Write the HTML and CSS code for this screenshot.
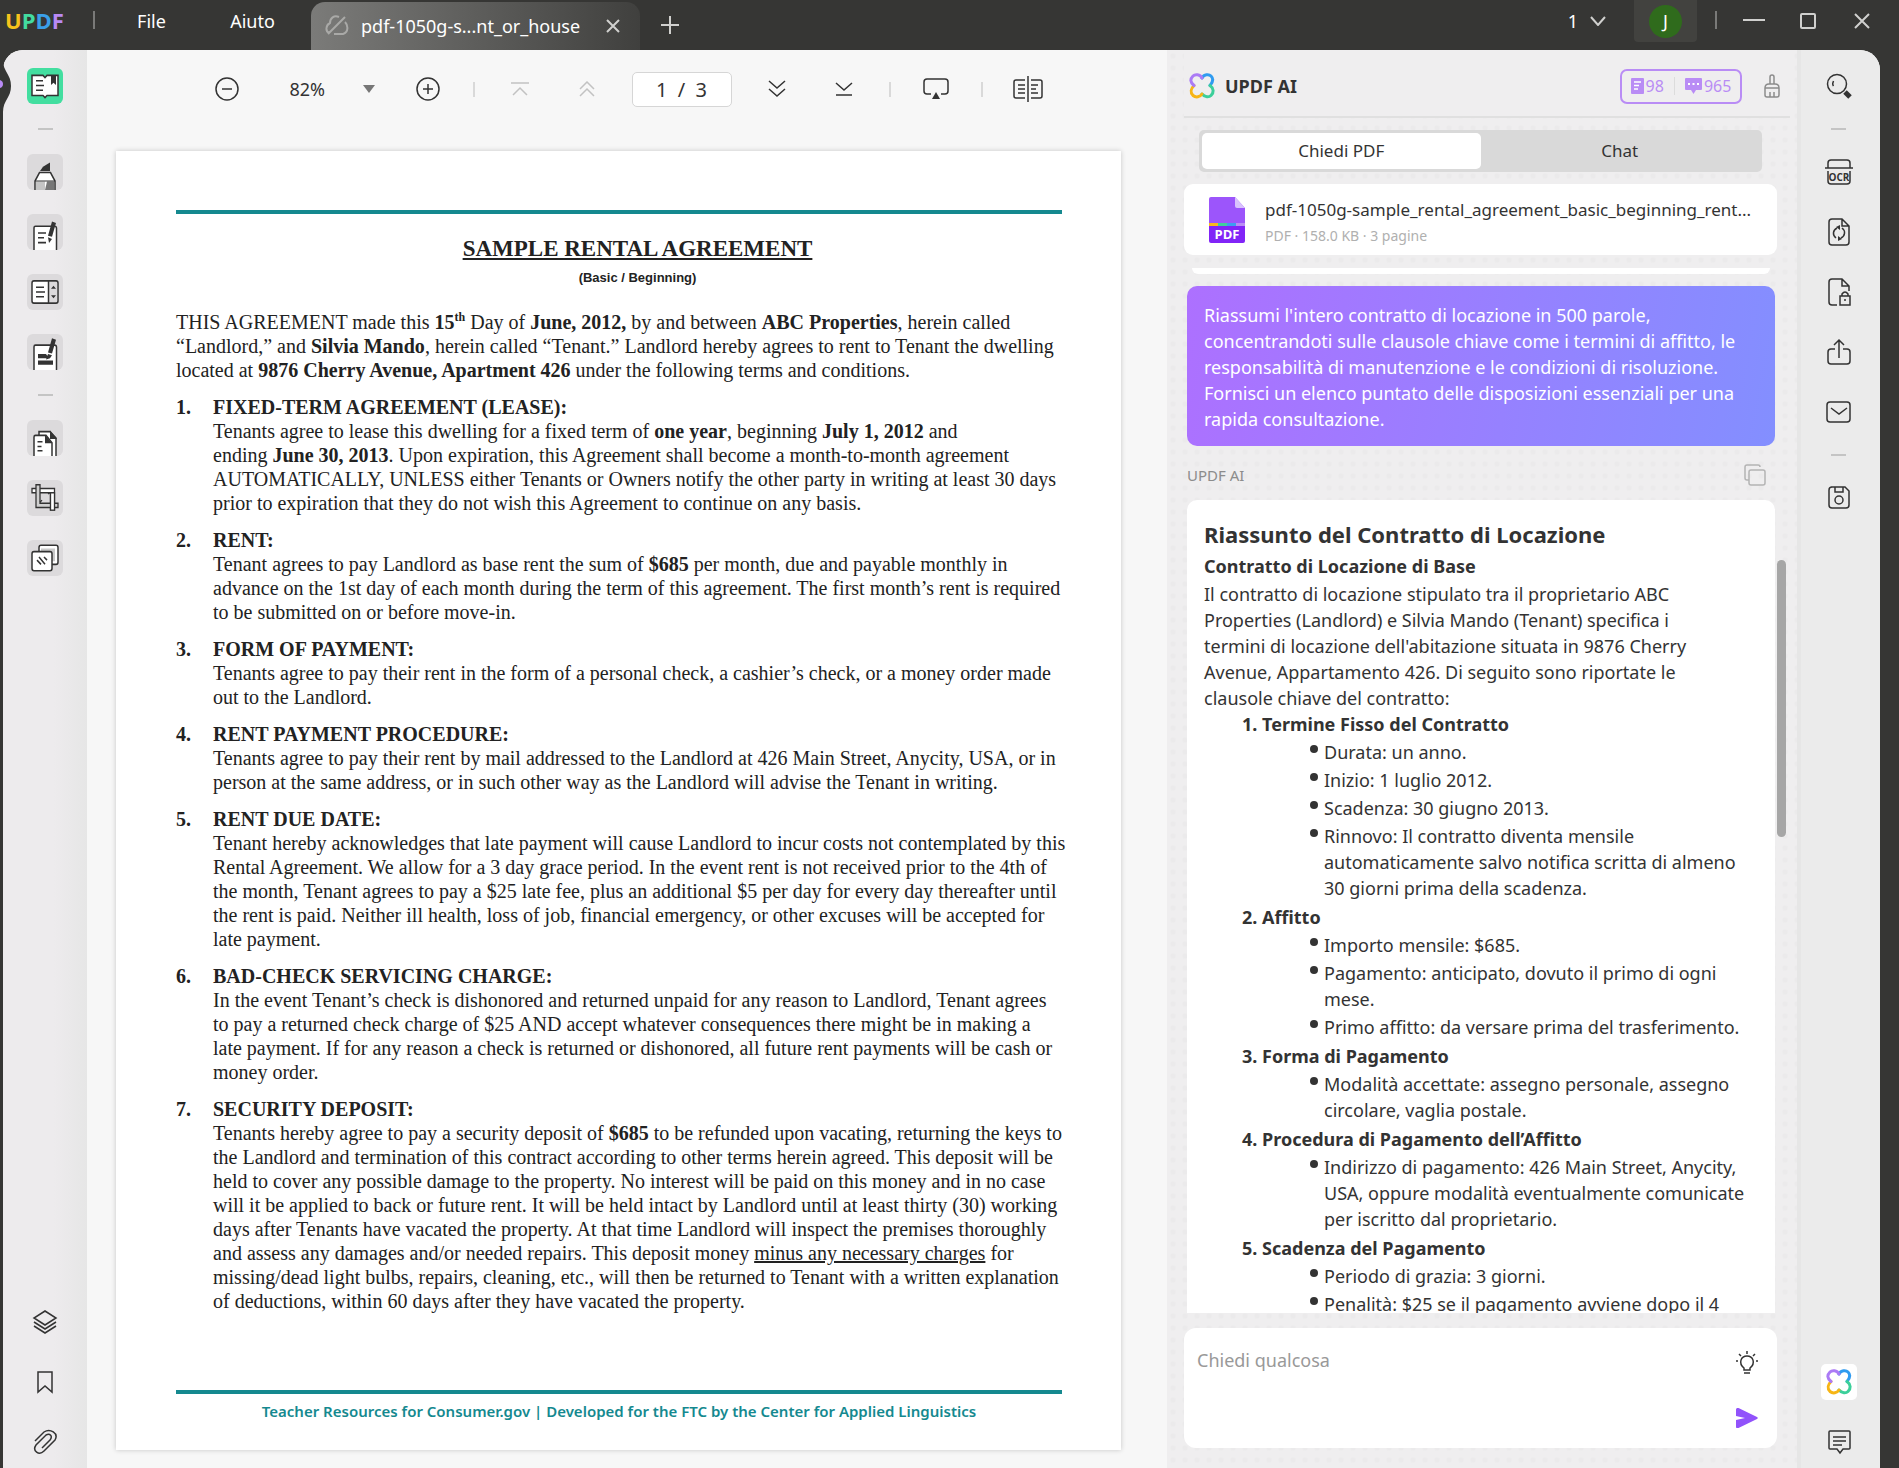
FILE: index.html
```html
<!DOCTYPE html>
<html lang="it">
<head>
<meta charset="utf-8">
<title>UPDF</title>
<link rel="stylesheet" href="styles.css">
</head>
<body>
<svg class="defs" aria-hidden="true">
  <defs>
    <symbol id="clover" viewBox="0 0 26 26" fill="none" stroke-width="3" stroke-linecap="round">
      <path stroke="#2f9bf0" d="M13 5C15 1 20 1 22 3c3 3 2 6-1 9.500"/>
      <path stroke="#3ccf9a" d="M21 12.500c4 3 4 7 1 10-2 2-6 2-9-1.500"/>
      <path stroke="#f7b515" d="M13 21c-2 3-6 4-9 1.500-3-3-2-7 1-10"/>
      <path stroke="#ab7bf5" d="M5 12.500C1 9 1 6 4 3c2-2 7-2 9 2"/>
    </symbol>
  </defs>
</svg>

<header class="titlebar">
  <div class="brand"><span class="u">U</span><span class="p">P</span><span class="d">D</span><span class="f">F</span></div>
  <span class="bar-sep"></span>
  <nav class="menu"><button>File</button><button>Aiuto</button></nav>
  <div class="doc-tab">
    <svg width="24" height="24" viewBox="0 0 24 24" fill="none" stroke="#a9a9a7" stroke-width="2"><path d="M3 20L20 3M14 3c-5-2-9 1-9 6-4 2-5 8-1 10M20 8c3 3 4 10-2 12H9"/></svg>
    <span class="doc-name">pdf-1050g-s...nt_or_house</span>
    <button aria-label="Chiudi scheda"><svg width="14" height="14" viewBox="0 0 14 14" stroke="#d0d0ce" stroke-width="2"><path d="M1 1l12 12M13 1L1 13"/></svg></button>
  </div>
  <button class="new-tab" aria-label="Nuova scheda"><svg width="18" height="18" viewBox="0 0 18 18" stroke="#d0d0ce" stroke-width="2"><path d="M9 0v18M0 9h18"/></svg></button>
  <div class="window-tools">
    <button class="count">1 <svg width="16" height="10" viewBox="0 0 16 10" fill="none" stroke="#d0d0ce" stroke-width="2"><path d="M1 1l7 8 7-8"/></svg></button>
    <button class="account"><span class="avatar">J</span></button>
    <span class="bar-sep"></span>
    <button class="win" aria-label="Riduci"><svg width="22" height="16" viewBox="0 0 22 16" stroke="#d0d0ce" stroke-width="2"><path d="M0 7h22"/></svg></button>
    <button class="win" aria-label="Ingrandisci"><svg width="16" height="16" viewBox="0 0 16 16" fill="none" stroke="#d0d0ce" stroke-width="2"><rect x="1" y="1" width="14" height="14" rx="1"/></svg></button>
    <button class="win" aria-label="Chiudi"><svg width="16" height="16" viewBox="0 0 16 16" stroke="#d0d0ce" stroke-width="2"><path d="M1 1l14 14M15 1L1 15"/></svg></button>
  </div>
</header>

<svg class="notch" width="12" height="52" viewBox="0 0 12 52"><path fill="#363634" d="M0 0h3c0 12 8 14 8 26s-8 14-8 26H0z"/><path fill="#b98af5" d="M0 20q3 1 3 4t-3 4z"/></svg>

<div class="shell">
  <aside class="rail rail-left">
    <button class="tool active" aria-label="Lettore"><svg viewBox="0 0 36 34" preserveAspectRatio="none"><path fill="#fff" stroke="#333" stroke-width="1.500" d="M5 7h11l2 2 2-2h11v19H20l-2 2-2-2H5z"/><path fill="#333" d="M24 7h5v9l-2.500-2-2.500 2z"/><path stroke="#333" stroke-width="1.500" d="M9 12h7M9 16.500h8M9 21h7"/></svg></button>
    <hr>
    <button class="tool" aria-label="Commento"><svg viewBox="0 0 36 34" preserveAspectRatio="none"><path fill="#333" d="M13 16l3-4 7-4v8z"/><path fill="#fff" stroke="#333" stroke-width="1.500" d="M12.500 17.500h11l4.500 8V36H8V25.500z"/><path fill="#c4c4c4" d="M9 26h9v8H9z"/><path fill="#777" d="M20 26h7v8h-9z"/><path stroke="#333" d="M8 25.500h20"/></svg></button>
    <button class="tool" aria-label="Modifica"><svg viewBox="0 0 36 34" preserveAspectRatio="none"><path fill="#fff" stroke="#333" stroke-width="1.500" d="M7 36V13q0-1.500 1.500-1.500h19q2 0 2 2V36"/><path stroke="#333" stroke-width="1.500" d="M11 18h8M11 22.500h6M11 27h8"/><path fill="#333" d="M25 7l4 1.500-4 13-4-1zM21 22l4 1.500-3 4z"/></svg></button>
    <button class="tool" aria-label="Modulo"><svg viewBox="0 0 36 34" preserveAspectRatio="none"><rect x="5" y="6.500" width="26" height="21" rx="2" fill="#fff" stroke="#333" stroke-width="1.500"/><path fill="#dcdadc" d="M22 7.500h8v19h-8z"/><path stroke="#333" stroke-width="1.500" d="M21.500 6v22M9 12.500h8M9 17h9M9 21.500h8"/><path fill="#333" d="M24 14l2.500-3 2.500 3zM24 20h5l-2.500 3z"/></svg></button>
    <button class="tool" aria-label="Oscura"><svg viewBox="0 0 36 34" preserveAspectRatio="none"><path fill="#fff" stroke="#333" stroke-width="1.500" d="M7 36V12q0-1.500 1.500-1.500h19q2 0 2 2V36"/><path fill="#333" d="M11 19h8l3 4H11zM11 25h15v4H11zM25 4l4 1.500-4 13-4-1zM21 19l4 1-2 3-4 1z"/></svg></button>
    <hr>
    <button class="tool" aria-label="Organizza pagine"><svg viewBox="0 0 36 34" preserveAspectRatio="none"><path fill="#fff" stroke="#333" stroke-width="1.500" d="M12 16v-5h11l6 6v19H12z"/><path fill="#333" d="M23 10l7 8h-7z"/><path fill="#fff" stroke="#333" stroke-width="1.500" d="M7 36V16q0-1.500 1.500-1.500H19l6 7V36"/><path fill="#333" d="M18 14l7 8h-7z"/><path stroke="#333" stroke-width="1.500" d="M10.500 20.500h5M10.500 25h4M10.500 29h5"/></svg></button>
    <button class="tool" aria-label="Ritaglia"><svg viewBox="0 0 36 34" preserveAspectRatio="none"><g stroke="#333" stroke-width="1.300"><path fill="#fff" fill-rule="evenodd" d="M5 8h22.500v20.500h-4V12H5z"/><path fill="#d0d0d0" d="M9 4.500h4V22h18v4H9z"/><path fill="#fff" d="M23.500 12h4v16.500h-4z"/><path fill="none" d="M13 21l2-2M21 13l2-1"/></g></svg></button>
    <button class="tool" aria-label="Filigrana"><svg viewBox="0 0 36 34" preserveAspectRatio="none"><rect x="12" y="5" width="19" height="18" rx="2" fill="#fff" stroke="#333" stroke-width="1.500"/><path fill="#c9c9c9" d="M14 8h14v12H14z"/><rect x="5" y="11" width="20" height="18" rx="2" fill="#fff" stroke="#333" stroke-width="1.500"/><path stroke="#333" stroke-width="1.500" d="M10 19l4 4M12 16l6 7M17 16l3 3"/></svg></button>
    <div class="rail-bottom">
      <button class="icon" aria-label="Livelli"><svg width="26" height="26" viewBox="0 0 26 26"><path d="M13 2l11 7-11 7L2 9zM2 13l11 7 11-7M2 17l11 7 11-7"/></svg></button>
      <button class="icon" aria-label="Segnalibri"><svg width="26" height="26" viewBox="0 0 26 26"><path d="M6 3h14v20l-7-6-7 6z"/></svg></button>
      <button class="icon" aria-label="Allegati"><svg width="26" height="26" viewBox="0 0 26 26"><path d="M3 12L12 3c6-4 15 1 11 8L12 22c-5 5-12 0-8-6L14 6c4-2 7 1 4 5l-8 8"/></svg></button>
    </div>
  </aside>

  <main class="viewer">
    <div class="toolbar">
      <button aria-label="Riduci zoom"><svg width="26" height="26" viewBox="0 0 26 26"><circle cx="13" cy="13" r="11"/><path d="M8 13h10"/></svg></button>
      <div class="zoom"><select aria-label="Zoom"><option>82%</option></select><svg width="12" height="8" viewBox="0 0 12 8"><path class="solid" d="M0 0h12L6 8z"/></svg></div>
      <button aria-label="Aumenta zoom"><svg width="26" height="26" viewBox="0 0 26 26"><circle cx="13" cy="13" r="11"/><path d="M8 13h10M13 8v10"/></svg></button>
      <span class="sep"></span>
      <button class="off" aria-label="Prima pagina" disabled><svg width="18" height="14" viewBox="0 0 18 14"><path d="M0 1h18M2 13l7-7 7 7"/></svg></button>
      <button class="off" aria-label="Pagina precedente" disabled><svg width="16" height="16" viewBox="0 0 16 16"><path d="M1 8l7-7 7 7M1 15l7-7 7 7"/></svg></button>
      <input class="page-no" aria-label="Pagina" value="1  /  3">
      <button aria-label="Pagina successiva"><svg width="18" height="18" viewBox="0 0 18 18"><path d="M1 1l8 7 8-7M1 9l8 7 8-7"/></svg></button>
      <button aria-label="Ultima pagina"><svg width="18" height="14" viewBox="0 0 18 14"><path d="M1 1l8 7 8-7M1 13h16"/></svg></button>
      <span class="sep"></span>
      <button aria-label="Presentazione"><svg width="26" height="22" viewBox="0 0 26 22"><path d="M8 16H4q-3 0-3-3V4q0-3 3-3h18q3 0 3 3v9q0 3-3 3h-4"/><path class="solid" d="M13 14l4 7H9z"/></svg></button>
      <span class="sep"></span>
      <button aria-label="Confronta"><svg width="30" height="26" viewBox="0 0 30 26"><path d="M12 4H3q-2 0-2 2v14q0 2 2 2h9M18 4h9q2 0 2 2v14q0 2-2 2h-9M15 0v26M5 9h7M5 13h7M5 17h7M18 9h7M18 13h5M18 17h7"/></svg></button>
    </div>

    <article class="page" lang="en">
      <div class="rule"></div>
      <h1>SAMPLE RENTAL AGREEMENT</h1>
      <p class="level">(Basic / Beginning)</p>
      <p class="intro">THIS AGREEMENT made this <b>15<sup>th</sup></b> Day of <b>June, 2012,</b> by and between <b>ABC Properties</b>, herein called<br>“Landlord,” and <b>Silvia Mando</b>, herein called “Tenant.” Landlord hereby agrees to rent to Tenant the dwelling<br>located at <b>9876 Cherry Avenue, Apartment 426</b> under the following terms and conditions.</p>
      <ol class="clauses">
        <li><h2>FIXED-TERM AGREEMENT (LEASE):</h2><p>Tenants agree to lease this dwelling for a fixed term of <b>one year</b>, beginning <b>July 1, 2012</b> and<br>ending <b>June 30, 2013</b>. Upon expiration, this Agreement shall become a month-to-month agreement<br>AUTOMATICALLY, UNLESS either Tenants or Owners notify the other party in writing at least 30 days<br>prior to expiration that they do not wish this Agreement to continue on any basis.</p></li>
        <li><h2>RENT:</h2><p>Tenant agrees to pay Landlord as base rent the sum of <b>$685</b> per month, due and payable monthly in<br>advance on the 1st day of each month during the term of this agreement. The first month’s rent is required<br>to be submitted on or before move-in.</p></li>
        <li><h2>FORM OF PAYMENT:</h2><p>Tenants agree to pay their rent in the form of a personal check, a cashier’s check, or a money order made<br>out to the Landlord.</p></li>
        <li><h2>RENT PAYMENT PROCEDURE:</h2><p>Tenants agree to pay their rent by mail addressed to the Landlord at 426 Main Street, Anycity, USA, or in<br>person at the same address, or in such other way as the Landlord will advise the Tenant in writing.</p></li>
        <li><h2>RENT DUE DATE:</h2><p>Tenant hereby acknowledges that late payment will cause Landlord to incur costs not contemplated by this<br>Rental Agreement. We allow for a 3 day grace period. In the event rent is not received prior to the 4th of<br>the month, Tenant agrees to pay a $25 late fee, plus an additional $5 per day for every day thereafter until<br>the rent is paid. Neither ill health, loss of job, financial emergency, or other excuses will be accepted for<br>late payment.</p></li>
        <li><h2>BAD-CHECK SERVICING CHARGE:</h2><p>In the event Tenant’s check is dishonored and returned unpaid for any reason to Landlord, Tenant agrees<br>to pay a returned check charge of $25 AND accept whatever consequences there might be in making a<br>late payment. If for any reason a check is returned or dishonored, all future rent payments will be cash or<br>money order.</p></li>
        <li><h2>SECURITY DEPOSIT:</h2><p>Tenants hereby agree to pay a security deposit of <b>$685</b> to be refunded upon vacating, returning the keys to<br>the Landlord and termination of this contract according to other terms herein agreed. This deposit will be<br>held to cover any possible damage to the property. No interest will be paid on this money and in no case<br>will it be applied to back or future rent. It will be held intact by Landlord until at least thirty (30) working<br>days after Tenants have vacated the property. At that time Landlord will inspect the premises thoroughly<br>and assess any damages and/or needed repairs. This deposit money <u>minus any necessary charges</u> for<br>missing/dead light bulbs, repairs, cleaning, etc., will then be returned to Tenant with a written explanation<br>of deductions, within 60 days after they have vacated the property.</p></li>
      </ol>
      <footer>
        <div class="rule"></div>
        <p>Teacher Resources for Consumer.gov | Developed for the FTC by the Center for Applied Linguistics</p>
      </footer>
    </article>
  </main>

  <section class="assistant">
    <header class="ai-head">
      <svg width="26" height="26"><use href="#clover"/></svg>
      <h2>UPDF AI</h2>
      <div class="quota">
        <svg width="13" height="16" viewBox="0 0 13 16"><rect width="13" height="16" rx="1" fill="#b98cf5"/><path stroke="#fff" stroke-width="1.500" d="M3 4h7M3 7.500h5M3 11h4"/></svg><span>98</span>
        <i></i>
        <svg width="17" height="16" viewBox="0 0 17 16"><path fill="#b98cf5" d="M1 0h15q1 0 1 1v10q0 1-1 1h-5l-2.500 4L6 12H1q-1 0-1-1V1q0-1 1-1z"/><path stroke="#fff" stroke-width="2" d="M3 6h2M7.500 6h2M12 6h2"/></svg><span>965</span>
      </div>
      <button class="broom" aria-label="Pulisci"><svg width="16" height="24" viewBox="0 0 16 24" fill="none" stroke="#8c8c8c" stroke-width="1.500"><path d="M6 10V3q0-2 2-2t2 2v7M1 14q0-4 4-4h6q4 0 4 4v7q0 2-2 2H3q-2 0-2-2zM1 14h14M6 18v5M10 18v5"/></svg></button>
    </header>
    <div class="tabs"><button class="on">Chiedi PDF</button><button>Chat</button></div>
    <div class="file">
      <svg width="36" height="46" viewBox="0 0 36 46"><path fill="#9c55fb" d="M2 0h24l10 11v18H0V2q0-2 2-2z"/><path fill="#d9c2fd" d="M26 0l10 11h-8q-2 0-2-2z"/><path fill="#f9b71c" d="M0 26h9v3H0z"/><path fill="#3fcf9c" d="M9 26h9v3H9z"/><path fill="#3d9df0" d="M18 26h9v3h-9z"/><path fill="#b98cf5" d="M27 26h9v3h-9z"/><path fill="#8124f7" d="M0 29h36v15q0 2-2 2H2q-2 0-2-2z"/><text x="18" y="42" text-anchor="middle" fill="#fff" font-family="Open Sans, sans-serif" font-size="13" font-weight="700">PDF</text></svg>
      <div><strong>pdf-1050g-sample_rental_agreement_basic_beginning_rent...</strong><small>PDF · 158.0 KB · 3 pagine</small></div>
    </div>
    <div class="thread">
      <div class="thread-inner">
        <div class="earlier"></div>
        <p class="question">Riassumi l'intero contratto di locazione in 500 parole, concentrandoti sulle clausole chiave come i termini di affitto, le responsabilità di manutenzione e le condizioni di risoluzione. Fornisci un elenco puntato delle disposizioni essenziali per una rapida consultazione.</p>
        <div class="sender"><span>UPDF AI</span><button aria-label="Copia"><svg width="22" height="22" viewBox="0 0 22 22" fill="none" stroke="#b4b4b4" stroke-width="1.500"><path d="M5 16H3q-2 0-2-2V3q0-2 2-2h11q2 0 2 2"/><rect x="5" y="6" width="16" height="15" rx="2"/></svg></button></div>
        <div class="answer">
          <h3>Riassunto del Contratto di Locazione</h3>
          <h4>Contratto di Locazione di Base</h4>
          <p>Il contratto di locazione stipulato tra il proprietario ABC<br>Properties (Landlord) e Silvia Mando (Tenant) specifica i<br>termini di locazione dell'abitazione situata in 9876 Cherry<br>Avenue, Appartamento 426. Di seguito sono riportate le<br>clausole chiave del contratto:</p>
          <section><h4>1. Termine Fisso del Contratto</h4><ul><li>Durata: un anno.</li><li>Inizio: 1 luglio 2012.</li><li>Scadenza: 30 giugno 2013.</li><li>Rinnovo: Il contratto diventa mensile<br>automaticamente salvo notifica scritta di almeno<br>30 giorni prima della scadenza.</li></ul></section>
          <section><h4>2. Affitto</h4><ul><li>Importo mensile: $685.</li><li>Pagamento: anticipato, dovuto il primo di ogni<br>mese.</li><li>Primo affitto: da versare prima del trasferimento.</li></ul></section>
          <section><h4>3. Forma di Pagamento</h4><ul><li>Modalità accettate: assegno personale, assegno<br>circolare, vaglia postale.</li></ul></section>
          <section><h4>4. Procedura di Pagamento dell’Affitto</h4><ul><li>Indirizzo di pagamento: 426 Main Street, Anycity,<br>USA, oppure modalità eventualmente comunicate<br>per iscritto dal proprietario.</li></ul></section>
          <section><h4>5. Scadenza del Pagamento</h4><ul><li>Periodo di grazia: 3 giorni.</li><li>Penalità: $25 se il pagamento avviene dopo il 4</li></ul></section>
        </div>
      </div>
      <div class="thumb"></div>
    </div>
    <form class="composer">
      <textarea aria-label="Messaggio" placeholder="Chiedi qualcosa"></textarea>
      <div class="composer-tools">
        <button type="button" aria-label="Suggerimenti"><svg width="24" height="24" viewBox="0 0 24 24" fill="none" stroke="#333" stroke-width="1.500"><path d="M9 19v-2c-6-5-3-12 3-12s9 7 3 12v2zM9 22h6M12 0v3M4 3l2 2M20 3l-2 2M1 10h2M21 10h2"/></svg></button>
        <button type="button" aria-label="Invia"><svg width="22" height="20" viewBox="0 0 22 20"><path fill="#9152fb" d="M1 0q.5-.5 1.500 0L21 9q1.500 1 0 2L2.500 20Q0 21 0 18.500V12l9-2-9-2V1.500Q0 .5 1 0z"/></svg></button>
      </div>
    </form>
  </section>

  <aside class="rail rail-right">
    <button class="icon" aria-label="Cerca"><svg width="28" height="28" viewBox="0 0 28 28"><circle cx="12" cy="12" r="9.500"/><path d="M8.500 9q-1.500 3 0 5"/><path class="thick" d="M20 20l5 5"/></svg></button>
    <hr>
    <button class="icon" aria-label="OCR"><svg width="28" height="28" viewBox="0 0 28 28"><path d="M0 10h28M3 10V5q0-3 3-3h16q3 0 3 3v5M3 13v10q0 3 3 3h16q3 0 3-3V13"/><text x="14" y="23" text-anchor="middle">OCR</text></svg></button>
    <button class="icon" aria-label="Converti"><svg width="28" height="28" viewBox="0 0 28 28"><path d="M17 1H7Q4 1 4 4v20q0 3 3 3h14q3 0 3-3V8zM17 1v7h7M12 10c-4 2-5 7-1 10M16 20c4-2 5-7 1-10"/><path class="solid" d="M11 9l4-2v5zM17 21l-4 2v-5z"/></svg></button>
    <button class="icon" aria-label="Proteggi"><svg width="28" height="28" viewBox="0 0 28 28"><path d="M12 27H7q-3 0-3-3V4q0-3 3-3h10l7 7v5M17 1v7h7M15 18h10v9H15zM17 18v-2q3-4 6 0v2M19 22h2"/></svg></button>
    <button class="icon" aria-label="Condividi"><svg width="28" height="28" viewBox="0 0 28 28"><path d="M10 11H6q-3 0-3 3v9q0 3 3 3h16q3 0 3-3v-9q0-3-3-3h-4M14 20V2M9 7l5-5 5 5"/></svg></button>
    <button class="icon" aria-label="Invia per email"><svg width="28" height="28" viewBox="0 0 28 28"><rect x="2" y="4" width="23" height="20" rx="3"/><path d="M6 10l8 6 8-6"/></svg></button>
    <hr>
    <button class="icon" aria-label="Salva"><svg width="28" height="28" viewBox="0 0 28 28"><path d="M6 3h14l4 4v14q0 3-3 3H7q-3 0-3-3V6q0-3 3-3M10 3v5h8V3"/><circle cx="14" cy="16" r="4"/></svg></button>
    <div class="rail-bottom">
      <button class="icon ai" aria-label="UPDF AI"><svg width="26" height="26"><use href="#clover"/></svg></button>
      <button class="icon" aria-label="Commenti"><svg width="28" height="28" viewBox="0 0 28 28"><path d="M5 3h19q1 0 1 1v16q0 1-1 1h-6l-3 4-3-4H5q-1 0-1-1V4q0-1 1-1zM8 9h13M8 13h13M8 17h9"/></svg></button>
    </div>
  </aside>
</div>
</body>
</html>
```
FILE: styles.css
```css
* { box-sizing: border-box; }
html, body { height: 100%; }
body {
  position: relative;
  margin: 0;
  display: flex;
  flex-direction: column;
  overflow: hidden;
  background: #363634;
  color: #333;
  font: 18px/26px "Noto Sans", "Open Sans", sans-serif;
}
h1, h2, h3, h4, p, ul, ol { margin: 0; padding: 0; }
ul, ol { list-style: none; }
button {
  display: flex;
  align-items: center;
  justify-content: center;
  padding: 0;
  border: 0;
  background: none;
  color: inherit;
  font: inherit;
}
.defs { position: absolute; width: 0; height: 0; }

/* Title bar */
.titlebar {
  display: flex;
  flex: none;
  height: 50px;
  padding-right: 26px;
  color: #fff;
}
.brand { width: 93px; padding: 6px 0 0 5px; font: 700 22px/28px "Open Sans", sans-serif; }
.brand .u { color: #f6c31c; }
.brand .p { color: #43dba0; }
.brand .d { color: #3a9fe8; }
.brand .f { color: #b98af5; }
.bar-sep { width: 2px; height: 18px; margin-top: 11px; background: #7a7a78; }
.menu { display: flex; height: 42px; padding-left: 6px; }
.menu button { width: 101px; }
.doc-tab {
  display: flex;
  align-items: center;
  gap: 12px;
  width: 329px;
  height: 48px;
  margin: 2px 0 0 8px;
  padding: 0 20px 0 14px;
  border-radius: 14px 14px 0 0;
  background: linear-gradient(90deg, #7b7b79, #40403e);
}
.doc-name { flex: 1; white-space: nowrap; }
.new-tab { width: 60px; }
.window-tools { display: flex; height: 42px; margin-left: auto; }
.count { gap: 12px; width: 54px; }
.account { width: 63px; margin: 0 18px 0 20px; border-radius: 0 0 4px 4px; background: #42423f; }
.avatar { width: 33px; height: 33px; border-radius: 50%; background: #2f6b1c; line-height: 33px; }
.win { width: 54px; }
.window-tools .bar-sep { margin-right: 10px; }
.win:last-child { width: 54px; margin-right: -16px; }

/* Frame */
.shell {
  display: flex;
  flex: 1;
  min-height: 0;
  margin: 0 19px 0 3px;
  overflow: hidden;
  border-radius: 20px 20px 0 0;
  background: #f7f7f7;
}
.notch { position: absolute; left: 0; top: 60px; }
.rail {
  display: flex;
  flex: none;
  flex-direction: column;
  align-items: center;
}
.rail hr { flex: none; width: 15px; height: 2px; margin: 0; border: 0; background: #c4c4c4; }
.rail-left {
  gap: 24px;
  width: 84px;
  padding: 18px 0 12px;
  background: linear-gradient(90deg, #edebed 60%, #e6e6e6);
}
.tool { flex: none; width: 36px; height: 36px; overflow: hidden; border-radius: 6px; background: #dcdadc; }
.tool svg { width: 36px; height: 36px; }
.tool.active { background: #43dea0; }
.rail-bottom { display: flex; flex-direction: column; align-items: center; gap: 32px; margin-top: auto; }
.icon { flex: none; width: 36px; height: 28px; }
.icon svg { fill: none; stroke: #333; stroke-width: 1.5; }
.icon .solid { fill: #333; stroke: none; }
.icon .thick { stroke-width: 5; }
.icon text { fill: #333; stroke: none; font: 700 10px "Open Sans", sans-serif; }
.rail-right {
  gap: 32px;
  width: 83px;
  padding: 22px 0 12px;
  box-shadow: inset 4px 0 #e6e6e6;
  background: #ebebeb;
}
.rail-right hr { margin: -4px 0; }
.icon.ai { height: 36px; margin-bottom: -4px; border-radius: 5px; background: #fff; }
.icon.ai svg { stroke: none; stroke-width: 3; }

/* Viewer */
.viewer { display: flex; flex: 1; flex-direction: column; min-width: 0; background: #f7f7f7; }
.toolbar {
  display: flex;
  flex: none;
  align-items: center;
  justify-content: center;
  gap: 23px;
  height: 78px;
  margin-bottom: 23px;
}
.toolbar button { width: 44px; height: 36px; }
.toolbar svg { fill: none; stroke: #333; stroke-width: 1.5; }
.toolbar .solid { fill: #333; stroke: none; }
.toolbar .off svg { stroke: #c2c2c2; }
.toolbar .sep { width: 2px; height: 15px; background: #d9d9d9; }
.zoom { display: flex; align-items: center; width: 111px; }
.zoom select {
  flex: 1;
  min-width: 0;
  padding: 0 0 0 18px;
  border: 0;
  appearance: none;
  background: none;
  color: #333;
  font: inherit;
}
.zoom .solid { fill: #777; }
.zoom svg { margin-right: 8px; }
.page-no {
  width: 100px;
  height: 35px;
  border: 1px solid #d6d6d6;
  border-radius: 5px;
  background: #fff;
  color: #333;
  font: inherit;
  font-size: 20px;
  text-align: center;
  white-space: pre;
}

/* Document */
.page {
  display: flex;
  flex: 1;
  flex-direction: column;
  margin: 0 46px 18px 29px;
  padding: 59px 59px 24px 60px;
  background: #fff;
  box-shadow: 0 0 5px rgba(0, 0, 0, .2);
  color: #222;
  font: 20px/24px "Liberation Serif", serif;
  white-space: nowrap;
}
.rule { height: 4px; background: #15898f; }
.page h1 { margin: 21px 0 0 37px; font-size: 23px; line-height: 28px; text-align: center; text-decoration: underline; }
.level { margin: 3px 0 0 37px; font: 700 13px/24px "Liberation Sans", sans-serif; text-align: center; }
.intro { margin: 20px 0 13px; }
.page sup { font-size: 12px; line-height: 0; }
.clauses { counter-reset: clause; }
.clauses li { position: relative; margin-bottom: 13px; padding-left: 37px; counter-increment: clause; }
.clauses li::before { content: counter(clause) "."; position: absolute; left: 0; font-weight: 700; }
.clauses h2 { font: inherit; font-weight: 700; }
.page footer { margin-top: auto; color: #15898f; font: 600 15px/34px "Noto Sans", "Open Sans", sans-serif; text-align: center; }
.page footer p { margin-bottom: -2px; }

/* Assistant */
.assistant {
  display: flex;
  flex: none;
  flex-direction: column;
  width: 630px;
  padding: 0 7px 20px 17px;
  background: #efeeef radial-gradient(circle, #ebeaeb 2px, transparent 3px) 0 0 / 12px 12px;
}
.ai-head {
  display: flex;
  flex: none;
  align-items: center;
  height: 68px;
  padding: 6px 10px 0 5px;
  border-bottom: 2px solid #e0e0e0;
  background: #efeeef;
}
.ai-head h2 { flex: 1; margin-left: 10px; font-size: 18px; }
.quota {
  display: flex;
  align-items: center;
  justify-content: center;
  gap: 2px;
  width: 122px;
  height: 35px;
  margin-right: 22px;
  border: 2px solid #b98cf5;
  border-radius: 7px;
  color: #b98cf5;
  font-size: 16px;
}
.quota i { width: 1px; height: 18px; margin: 0 8px; background: #dcdcdc; }
.tabs {
  display: flex;
  flex: none;
  height: 42px;
  margin: 12px 28px 0 15px;
  padding: 3px;
  border-radius: 5px;
  background: #d9d9d9;
}
.tabs button { flex: 1; border-radius: 5px; font-size: 17px; }
.tabs .on { background: #fff; }
.file {
  display: flex;
  flex: none;
  align-items: center;
  gap: 20px;
  height: 71px;
  margin: 12px 13px 0 0;
  padding: 0 25px;
  border-radius: 9px;
  background: #fff;
}
.file div { padding-top: 6px; }
.file strong, .file small { display: block; white-space: nowrap; }
.file strong { font-size: 17px; font-weight: 400; }
.file small { color: #b0b0b0; font-size: 14px; }
.thread { position: relative; flex: 1; min-height: 0; margin: 13px 0 15px; }
.thread-inner { height: 100%; padding: 0 15px 0 3px; overflow: hidden; }
.earlier { height: 6px; margin: 0 5px 12px; border-radius: 0 0 8px 8px; background: #fff; }
.question {
  padding: 16px 17px 14px;
  border-radius: 10px;
  background: linear-gradient(100deg, #ad70ff, #838fff);
  color: #fff;
}
.sender { display: flex; align-items: center; justify-content: space-between; height: 54px; padding: 4px 9px 0 0; color: #8c8c8c; font-size: 15px; }
.answer { padding: 20px 17px; border-radius: 10px 10px 0 0; background: #fff; }
.answer h3 { margin-bottom: 5px; font-size: 22px; line-height: 28px; }
.answer h4 { margin-bottom: 2px; font-size: 18px; }
.answer section { margin-left: 38px; }
.answer section + section { margin-top: 3px; }
.answer p, .answer li { white-space: nowrap; }
.answer li { position: relative; margin-bottom: 2px; padding-left: 82px; }
.answer li::before { content: ""; position: absolute; left: 68px; top: 6px; width: 8px; height: 8px; border-radius: 50%; background: #333; }
.thumb { position: absolute; top: 292px; right: 4px; width: 9px; height: 277px; border-radius: 5px; background: #a6a6a6; }
.composer {
  display: flex;
  flex: none;
  height: 120px;
  margin-right: 13px;
  padding: 19px 16px 16px 13px;
  border-radius: 12px;
  background: #fff;
}
.composer textarea { flex: 1; padding: 0; border: 0; outline: 0; background: none; color: #333; font: inherit; resize: none; }
.composer textarea::placeholder { color: #999; }
.composer-tools { display: flex; flex-direction: column; justify-content: space-between; padding-top: 2px; }
.composer-tools button { width: 28px; height: 28px; }
```
